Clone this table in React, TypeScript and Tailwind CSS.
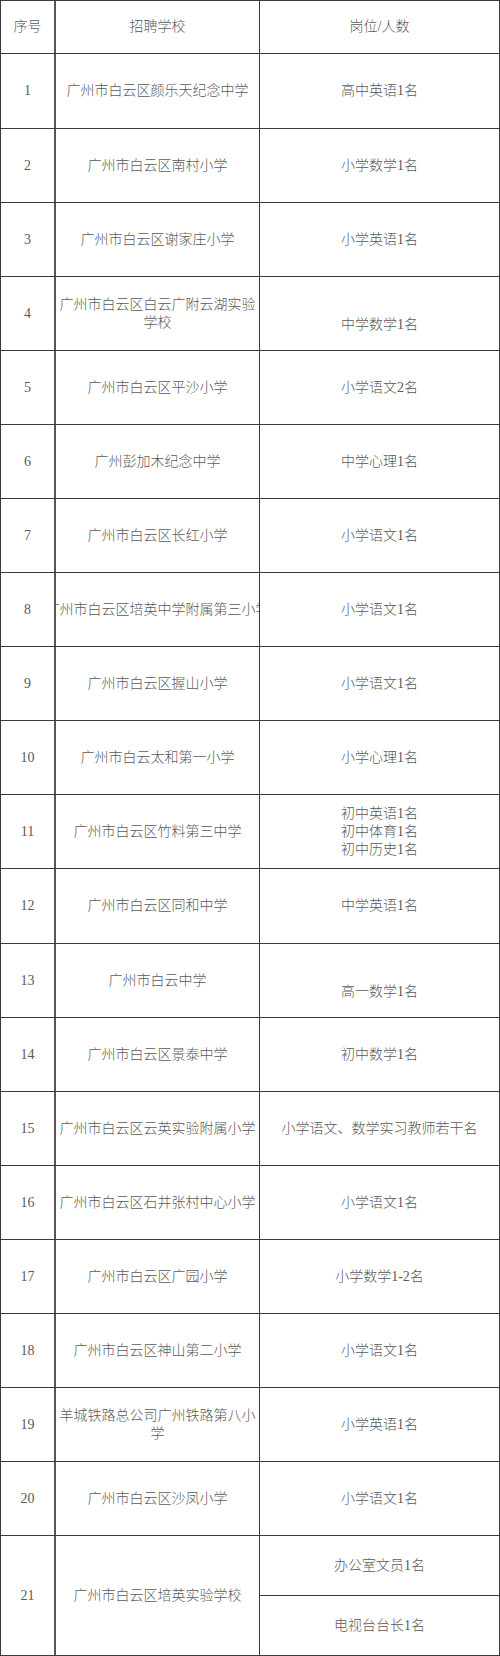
import React from "react";

type Row = {
  n: string;
  school: string;
  post: string[];
  h: string;
  nowrap?: boolean;
  shift?: boolean;
};

const rows: Row[] = [
  { n: "1", school: "广州市白云区颜乐天纪念中学", post: ["高中英语1名"], h: "h-[75px]" },
  { n: "2", school: "广州市白云区南村小学", post: ["小学数学1名"], h: "h-[74px]" },
  { n: "3", school: "广州市白云区谢家庄小学", post: ["小学英语1名"], h: "h-[74px]" },
  { n: "4", school: "广州市白云区白云广附云湖实验学校", post: ["中学数学1名"], h: "h-[74px]", shift: true },
  { n: "5", school: "广州市白云区平沙小学", post: ["小学语文2名"], h: "h-[74px]" },
  { n: "6", school: "广州彭加木纪念中学", post: ["中学心理1名"], h: "h-[74px]" },
  { n: "7", school: "广州市白云区长红小学", post: ["小学语文1名"], h: "h-[74px]" },
  { n: "8", school: "广州市白云区培英中学附属第三小学", post: ["小学语文1名"], h: "h-[74px]", nowrap: true },
  { n: "9", school: "广州市白云区握山小学", post: ["小学语文1名"], h: "h-[74px]" },
  { n: "10", school: "广州市白云太和第一小学", post: ["小学心理1名"], h: "h-[74px]" },
  { n: "11", school: "广州市白云区竹料第三中学", post: ["初中英语1名", "初中体育1名", "初中历史1名"], h: "h-[74px]" },
  { n: "12", school: "广州市白云区同和中学", post: ["中学英语1名"], h: "h-[75px]" },
  { n: "13", school: "广州市白云中学", post: ["高一数学1名"], h: "h-[74px]", shift: true },
  { n: "14", school: "广州市白云区景泰中学", post: ["初中数学1名"], h: "h-[74px]" },
  { n: "15", school: "广州市白云区云英实验附属小学", post: ["小学语文、数学实习教师若干名"], h: "h-[74px]" },
  { n: "16", school: "广州市白云区石井张村中心小学", post: ["小学语文1名"], h: "h-[74px]" },
  { n: "17", school: "广州市白云区广园小学", post: ["小学数学1-2名"], h: "h-[74px]" },
  { n: "18", school: "广州市白云区神山第二小学", post: ["小学语文1名"], h: "h-[74px]" },
  { n: "19", school: "羊城铁路总公司广州铁路第八小学", post: ["小学英语1名"], h: "h-[74px]" },
  { n: "20", school: "广州市白云区沙凤小学", post: ["小学语文1名"], h: "h-[74px]" },
];

const font = "font-['Liberation_Serif','Noto_Sans_CJK_SC',serif] font-light";

export default function App() {
  return (
    <div className={`w-[500px] bg-white text-[14px] leading-[18px] text-[#5a5a5a] ${font}`}>
      <div className="border-l border-r border-t border-[#3a3a3a]">
        {/* header */}
        <div className="grid h-[53px] grid-cols-[55px_204px_1fr] border-b border-[#3a3a3a]">
          <div className="flex items-center justify-center border-r-2 border-[#555]">序号</div>
          <div className="flex items-center justify-center border-r border-[#3a3a3a]">招聘学校</div>
          <div className="flex items-center justify-center">岗位/人数</div>
        </div>
        {rows.map((r) => (
          <div
            key={r.n}
            className={`grid ${r.h} grid-cols-[55px_204px_1fr] border-b border-[#3a3a3a]`}
          >
            <div className="flex items-center justify-center border-r-2 border-[#555]">{r.n}</div>
            <div className="flex items-center justify-center overflow-hidden border-r border-[#3a3a3a] px-[3px] text-center">
              {r.nowrap ? <span className="whitespace-nowrap">{r.school}</span> : <span>{r.school}</span>}
            </div>
            <div className={`flex flex-col items-center justify-center text-center ${r.shift ? "pt-[22px]" : ""}`}>
              {r.post.map((p) => (
                <div key={p}>{p}</div>
              ))}
            </div>
          </div>
        ))}
        {/* row 21 */}
        <div className="grid h-[120px] grid-cols-[55px_204px_1fr] border-b border-[#3a3a3a]">
          <div className="flex items-center justify-center border-r-2 border-[#555]">21</div>
          <div className="flex items-center justify-center border-r border-[#3a3a3a]">广州市白云区培英实验学校</div>
          <div className="flex flex-col">
            <div className="flex h-[60px] items-center justify-center border-b border-[#3a3a3a]">办公室文员1名</div>
            <div className="flex flex-1 items-center justify-center">电视台台长1名</div>
          </div>
        </div>
      </div>
    </div>
  );
}
